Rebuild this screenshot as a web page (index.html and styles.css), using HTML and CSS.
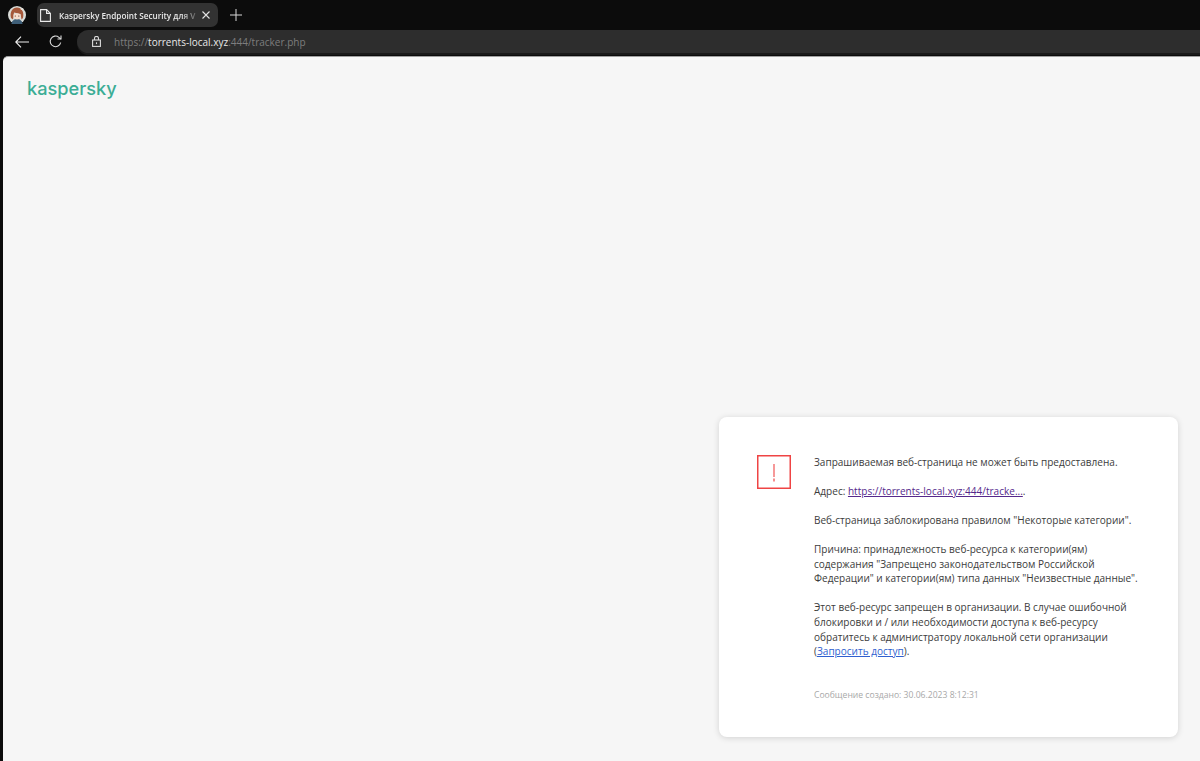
FILE: index.html
```html
<!DOCTYPE html>
<html lang="ru">
<head>
<meta charset="utf-8">
<title>Kaspersky Endpoint Security для Windows</title>
<link rel="stylesheet" href="styles.css">
</head>
<body>
<div class="tabbar">
  <svg class="avatar" width="18" height="18" viewBox="0 0 18 18">
    <circle cx="9" cy="9" r="9" fill="#d9dcd8"/>
    <path d="M3.500 18c0-3 2.500-5 5.500-5s5.500 2 5.500 5z" fill="#3f5f78"/>
    <path d="M3 12C1.500 6 4.500 1.500 9 1.500S16.500 6 15 12l-1.500 1.500L12.500 8 6 6.500 5 13.500z" fill="#a5583a"/>
    <path d="M5.500 8.500C6.500 7 11 7 12.500 8.500c.3 3-1 5-3.500 5S5.300 11.500 5.500 8.500z" fill="#f6dccb"/>
    <circle cx="7.300" cy="10" r=".6" fill="#5b2f22"/>
    <circle cx="10.800" cy="10" r=".6" fill="#5b2f22"/>
    <path d="M12 3l3-1 .5 3z" fill="#e8e4dc"/>
  </svg>
  <div class="tab">
    <svg class="tab-icon" width="11" height="13" viewBox="0 0 11 13" fill="none" stroke="#ececec" stroke-width="1.100">
      <path d="M.6.600h6l3.800 3.800v8H.600z"/><path d="M6.600.600v3.800h3.800"/>
    </svg>
    <span class="tab-title">Kaspersky Endpoint Security для V</span>
    <svg class="tab-close" width="8" height="8" viewBox="0 0 8 8" stroke="#e4e4e4" stroke-width="1.100"><path d="M.5.500l7 7M7.500.500l-7 7"/></svg>
  </div>
  <svg class="new-tab" width="12" height="12" viewBox="0 0 12 12" stroke="#d8d8d8" stroke-width="1"><path d="M6 0v12M0 6h12"/></svg>
</div>
<div class="toolbar">
  <svg class="back" width="14" height="12" viewBox="0 0 14 12" fill="none" stroke="#f0f0f0" stroke-width="1.100"><path d="M14 6H1M6 .700L.800 6 6 11.300"/></svg>
  <svg class="reload" width="13" height="13" viewBox="0 0 13 13" fill="none" stroke="#dcdcdc" stroke-width="1.100"><path d="M11.700 7.500A5.300 5.300 0 1 1 9.900 2.300L11.800 4"/><path d="M12 .500V4H8.500"/></svg>
  <div class="omnibox">
    <svg class="lock" width="9" height="11" viewBox="0 0 9 11" fill="none" stroke="#dcdcdc" stroke-width="1.100"><rect x=".6" y="4" width="7.800" height="6.400"/><path d="M2.500 4V2.400a2 2 0 0 1 4 0V4"/><path d="M4.500 6.300v1.800"/></svg>
    <span class="url"><span class="url-dim">https://</span><span class="url-host">torrents-local.xyz</span><span class="url-dim">:444/tracker.php</span></span>
  </div>
</div>
<main class="viewport">
  <div class="logo">kaspersky</div>
  <section class="card">
    <svg class="alert" width="34" height="34" viewBox="0 0 34 34" fill="none"><rect x="0.750" y="0.750" width="32.500" height="32.500" stroke="#ef4444" stroke-width="1.500"/><path d="M17 9v13" stroke="#ef4444" stroke-width="1.100"/><path d="M17 23.500v3" stroke="#ef4444" stroke-width="1.200"/></svg>
    <div class="message">
      <p>Запрашиваемая веб-страница не может быть предоставлена.</p>
      <p>Адрес: <a class="visited" href="#">https://torrents-local.xyz:444/tracke...</a>.</p>
      <p>Веб-страница заблокирована правилом "Некоторые категории".</p>
      <p>Причина: принадлежность веб-ресурса к категории(ям) содержания "Запрещено законодательством Российской Федерации" и категории(ям) типа данных "Неизвестные данные".</p>
      <p>Этот веб-ресурс запрещен в организации. В случае ошибочной блокировки и / или необходимости доступа к веб-ресурсу обратитесь к администратору локальной сети организации (<a class="link" href="#">Запросить доступ</a>).</p>
      <p class="stamp">Сообщение создано: 30.06.2023 8:12:31</p>
    </div>
  </section>
</main>
</body>
</html>
```

FILE: styles.css
```css
* { box-sizing: border-box; }
html, body { margin: 0; height: 761px; overflow: hidden; }
body { background: #0c0c0c; font-family: "Open Sans", "Noto Sans", sans-serif; display: flex; flex-direction: column; }
.tabbar { height: 30px; display: flex; align-items: center; padding-left: 8px; flex: none; }
.avatar { flex: none; }
.tab { width: 181px; height: 24px; margin-left: 11px; background: #323232; border-radius: 7px; display: flex; align-items: center; padding: 0 8px 0 3px; }
.tab-icon { flex: none; }
.tab-title { flex: 1; margin-left: 8px; color: #e8e8e8; font-size: 8.200px; font-weight: 600; white-space: nowrap; min-width: 0; overflow: hidden; -webkit-mask-image: linear-gradient(90deg, #000 88%, rgba(0,0,0,.15)); mask-image: linear-gradient(90deg, #000 88%, rgba(0,0,0,.15)); }
.tab-close { flex: none; margin-left: 4px; }
.new-tab { margin-left: 12px; flex: none; }
.toolbar { height: 23px; display: flex; align-items: center; flex: none; padding-left: 15px; }
.back { flex: none; }
.reload { flex: none; margin-left: 20px; }
.omnibox { flex: 1; height: 23px; margin-left: 15px; background: #2d2d2d; border-radius: 12px 0 0 12px; box-shadow: 0 2px 0 #1a1a1a; display: flex; align-items: center; padding-left: 15px; }
.lock { flex: none; }
.url { margin-left: 13px; font-size: 10px; white-space: nowrap; }
.url-dim { color: #7d7d7d; }
.url-host { color: #e8e8e8; font-weight: 500; }
.viewport { flex: 1; background: #f6f6f6; margin: 3px 0 0 3px; border-radius: 5px 0 0 0; border-top: 1px solid #a0a0a0; display: flex; flex-direction: column; min-height: 0; position: relative; }
.logo { margin: 16px 0 0 24px; color: #3bad95; font-family: "Inter", "Noto Sans", sans-serif; font-size: 18.200px; font-weight: 500; line-height: 30px; }
.card { position: absolute; left: 716px; top: 360px; width: 459px; height: 320px; background: #fff; border-radius: 8px; box-shadow: 0 1px 6px rgba(0,0,0,.15); display: flex; padding: 38px 30px 0 38px; }
.alert { flex: none; }
.message { margin-left: 23px; color: #3c3c3c; font-size: 10.040px; line-height: 14.550px; }
.message p { margin: 0 0 14.550px; }
.message .stamp { margin-top: 29px; color: #a8a8a8; font-size: 8.600px; }
.visited { color: #55288c; }
.link { color: #2f5fd0; }
```
